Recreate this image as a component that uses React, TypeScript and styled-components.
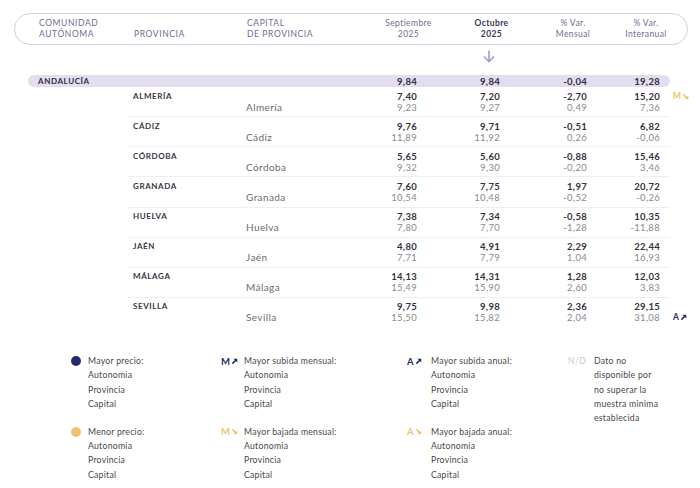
import React from 'react'
import styled, { createGlobalStyle } from 'styled-components'

const navy = '#262a6b'
const amber = '#f0c46e'

const GlobalStyle = createGlobalStyle`
  html, body { margin: 0; padding: 0; background: #fff; }
  body { font-family: Lato, "Noto Sans", sans-serif; color: #333; }
`

interface Province {
  name: string
  capital: string
  prov: string[]
  cap: string[]
  provBadge?: 'Mdown' | 'Mup' | 'Aup' | 'Adown'
  capBadge?: 'Mdown' | 'Mup' | 'Aup' | 'Adown'
}

const provinces: Province[] = [
  { name: 'ALMERÍA', capital: 'Almería', prov: ['7,40', '7,20', '-2,70', '15,20'], cap: ['9,23', '9,27', '0,49', '7,36'], provBadge: 'Mdown' },
  { name: 'CÁDIZ', capital: 'Cádiz', prov: ['9,76', '9,71', '-0,51', '6,82'], cap: ['11,89', '11,92', '0,26', '-0,06'] },
  { name: 'CÓRDOBA', capital: 'Córdoba', prov: ['5,65', '5,60', '-0,88', '15,46'], cap: ['9,32', '9,30', '-0,20', '3,46'] },
  { name: 'GRANADA', capital: 'Granada', prov: ['7,60', '7,75', '1,97', '20,72'], cap: ['10,54', '10,48', '-0,52', '-0,26'] },
  { name: 'HUELVA', capital: 'Huelva', prov: ['7,38', '7,34', '-0,58', '10,35'], cap: ['7,80', '7,70', '-1,28', '-11,88'] },
  { name: 'JAÉN', capital: 'Jaén', prov: ['4,80', '4,91', '2,29', '22,44'], cap: ['7,71', '7,79', '1,04', '16,93'] },
  { name: 'MÁLAGA', capital: 'Málaga', prov: ['14,13', '14,31', '1,28', '12,03'], cap: ['15,49', '15,90', '2,60', '3,83'] },
  { name: 'SEVILLA', capital: 'Sevilla', prov: ['9,75', '9,98', '2,36', '29,15'], cap: ['15,50', '15,82', '2,04', '31,08'], capBadge: 'Aup' },
]

const Page = styled.div`
  width: 700px;
  height: 488px;
  padding: 13px 0 0 14px;
  box-sizing: border-box;
  overflow: hidden;
`

const HeaderBar = styled.div`
  display: grid;
  grid-template-columns: 95px 113px 120px 83px 83px 80px 66px;
  align-items: end;
  width: 674px;
  height: 32px;
  box-sizing: border-box;
  padding: 0 10px 4px 24px;
  border: 1px solid #d4d0e0;
  border-radius: 17px;
  font-size: 8.5px;
  line-height: 11px;
  color: #706b93;
`

const HeadCell = styled.div<{ $center?: boolean; $strong?: boolean }>`
  text-align: ${p => (p.$center ? 'center' : 'left')};
  letter-spacing: ${p => (p.$center ? '0.4px' : '0.6px')};
  color: ${p => (p.$strong ? '#3b3658' : '#706b93')};
  font-weight: ${p => (p.$strong ? 700 : 400)};
`

const PointerRow = styled.div`
  height: 29px;
  box-sizing: border-box;
  padding: 2px 0 0 469px;
`

const Table = styled.div`
  margin-left: 14px;
  width: 660px;
`

const numCols = '113px 111px 60px 83px 87px 73px'

const SummaryRow = styled.div`
  display: grid;
  grid-template-columns: 95px ${numCols};
  align-items: center;
  width: 642px;
  height: 12px;
  margin-top: 1px;
  box-sizing: border-box;
  padding: 0 10px;
  background: #e4ddef;
  border-radius: 6px;
  font-size: 9.5px;
  font-weight: 700;
  color: #2f2c40;
`

const RegionName = styled.div`
  font-size: 8px;
  letter-spacing: 0.6px;
  grid-column: 1 / 4;
`

const SummaryNum = styled.div`
  text-align: right;
  letter-spacing: 0.3px;
`

const Group = styled.div`
  display: flex;
  padding-left: 100px;
`

const Lines = styled.div<{ $last?: boolean }>`
  display: grid;
  grid-template-columns: ${numCols};
  grid-template-rows: 11px 11px;
  width: 542px;
  box-sizing: border-box;
  padding: 3.5px 10px 3.65px 5px;
  border-bottom: 1px solid ${p => (p.$last ? 'transparent' : '#efeff1')};
  font-size: 9.5px;
  line-height: 11px;
`

const ProvName = styled.div`
  grid-row: 1;
  grid-column: 1;
  font-size: 8px;
  font-weight: 700;
  letter-spacing: 0.6px;
  color: #37343f;
`

const CapName = styled.div`
  grid-row: 2;
  grid-column: 2;
  font-size: 10px;
  letter-spacing: 0.4px;
  color: #6b6b6b;
`

const Num = styled.div<{ $row: number; $col: number }>`
  grid-row: ${p => p.$row};
  grid-column: ${p => p.$col};
  text-align: right;
  letter-spacing: 0.3px;
  font-weight: ${p => (p.$row === 1 ? 700 : 400)};
  color: ${p => (p.$row === 1 ? '#33313c' : '#8a8a8a')};
`

const BadgeCol = styled.div`
  display: grid;
  grid-template-rows: 11px 11px;
  padding: 3.5px 0 0 3px;
`

const Mark = styled.span<{ $color: string }>`
  display: inline-flex;
  align-items: center;
  gap: 1px;
  font-size: 8.5px;
  font-weight: 700;
  line-height: 11px;
  color: ${p => p.$color};
`

const Arrow = ({ up, color }: { up: boolean; color: string }) => (
  <svg width="7" height="7" viewBox="0 0 10 10">
    {up ? (
      <>
        <path d="M2 8 L7.5 2.5" stroke={color} strokeWidth="2.2" />
        <path d="M3.5 1 L9 1 L9 6.5 Z" fill={color} />
      </>
    ) : (
      <>
        <path d="M2 2 L7.5 7.5" stroke={color} strokeWidth="2.2" />
        <path d="M3.5 9 L9 9 L9 3.5 Z" fill={color} />
      </>
    )}
  </svg>
)

const Badge = ({ kind }: { kind?: Province['provBadge'] }) => {
  if (!kind) return <span />
  const letter = kind[0]
  const up = kind.endsWith('up')
  const color = up ? navy : amber
  return (
    <Mark $color={color}>
      {letter}
      <Arrow up={up} color={color} />
    </Mark>
  )
}

const Legend = styled.div`
  display: flex;
  margin-top: 26px;
  padding-left: 57px;
`

const LegendCol = styled.div<{ $w?: number }>`
  display: flex;
  flex-direction: column;
  gap: 14px;
  width: ${p => (p.$w ? `${p.$w}px` : 'auto')};
`

const Item = styled.div`
  display: flex;
  align-items: flex-start;
`

const IconBox = styled.div<{ $w: number }>`
  width: ${p => p.$w}px;
  height: 14px;
  display: flex;
  align-items: center;
  flex-shrink: 0;
`

const Dot = styled.span<{ $color: string }>`
  width: 10px;
  height: 10px;
  border-radius: 50%;
  background: ${p => p.$color};
`

const ItemText = styled.div`
  font-size: 8.7px;
  line-height: 14.2px;
  letter-spacing: 0.25px;
  color: #474747;
`

const NA = styled.span`
  font-size: 8.5px;
  letter-spacing: 0.5px;
  color: #c9c9cc;
`

const LegendMark = styled(Mark)`
  font-size: 9.5px;
`

const LegendBadge = ({ letter, up }: { letter: string; up: boolean }) => {
  const color = up ? navy : amber
  return (
    <LegendMark $color={color}>
      {letter}
      <Arrow up={up} color={color} />
    </LegendMark>
  )
}

const Lines3 = ({ title }: { title: string }) => (
  <ItemText>
    {title}
    <br />
    Autonomia
    <br />
    Provincia
    <br />
    Capital
  </ItemText>
)

export default function App() {
  return (
    <Page>
      <GlobalStyle />
      <HeaderBar>
        <HeadCell>
          COMUNIDAD
          <br />
          AUTÓNOMA
        </HeadCell>
        <HeadCell>PROVINCIA</HeadCell>
        <HeadCell>
          CAPITAL
          <br />
          DE PROVINCIA
        </HeadCell>
        <HeadCell $center>
          Septiembre
          <br />
          2025
        </HeadCell>
        <HeadCell $center $strong>
          Octubre
          <br />
          2025
        </HeadCell>
        <HeadCell $center>
          % Var.
          <br />
          Mensual
        </HeadCell>
        <HeadCell $center>
          % Var.
          <br />
          Interanual
        </HeadCell>
      </HeaderBar>
      <PointerRow>
        <svg width="12" height="13" viewBox="0 0 12 13">
          <path d="M6 0.5 V11.5 M1 6.5 L6 11.5 L11 6.5" fill="none" stroke="#a49bcb" strokeWidth="1.6" />
        </svg>
      </PointerRow>
      <Table>
        <SummaryRow>
          <RegionName>ANDALUCÍA</RegionName>
          <SummaryNum>9,84</SummaryNum>
          <SummaryNum>9,84</SummaryNum>
          <SummaryNum>-0,04</SummaryNum>
          <SummaryNum>19,28</SummaryNum>
        </SummaryRow>
        {provinces.map((p, i) => (
          <Group key={p.name}>
            <Lines $last={i === provinces.length - 1}>
              <ProvName>{p.name}</ProvName>
              <CapName>{p.capital}</CapName>
              {p.prov.map((v, j) => (
                <Num key={'p' + j} $row={1} $col={j + 3}>
                  {v}
                </Num>
              ))}
              {p.cap.map((v, j) => (
                <Num key={'c' + j} $row={2} $col={j + 3}>
                  {v}
                </Num>
              ))}
            </Lines>
            <BadgeCol>
              <Badge kind={p.provBadge} />
              <Badge kind={p.capBadge} />
            </BadgeCol>
          </Group>
        ))}
      </Table>
      <Legend>
        <LegendCol $w={150}>
          <Item>
            <IconBox $w={17}>
              <Dot $color={navy} />
            </IconBox>
            <Lines3 title="Mayor precio:" />
          </Item>
          <Item>
            <IconBox $w={17}>
              <Dot $color={amber} />
            </IconBox>
            <Lines3 title="Menor precio:" />
          </Item>
        </LegendCol>
        <LegendCol $w={186}>
          <Item>
            <IconBox $w={23}>
              <LegendBadge letter="M" up />
            </IconBox>
            <Lines3 title="Mayor subida mensual:" />
          </Item>
          <Item>
            <IconBox $w={23}>
              <LegendBadge letter="M" up={false} />
            </IconBox>
            <Lines3 title="Mayor bajada mensual:" />
          </Item>
        </LegendCol>
        <LegendCol $w={161}>
          <Item>
            <IconBox $w={24}>
              <LegendBadge letter="A" up />
            </IconBox>
            <Lines3 title="Mayor subida anual:" />
          </Item>
          <Item>
            <IconBox $w={24}>
              <LegendBadge letter="A" up={false} />
            </IconBox>
            <Lines3 title="Mayor bajada anual:" />
          </Item>
        </LegendCol>
        <LegendCol>
          <Item>
            <IconBox $w={26}>
              <NA>N/D</NA>
            </IconBox>
            <ItemText>
              Dato no
              <br />
              disponible por
              <br />
              no superar la
              <br />
              muestra minima
              <br />
              establecida
            </ItemText>
          </Item>
        </LegendCol>
      </Legend>
    </Page>
  )
}
